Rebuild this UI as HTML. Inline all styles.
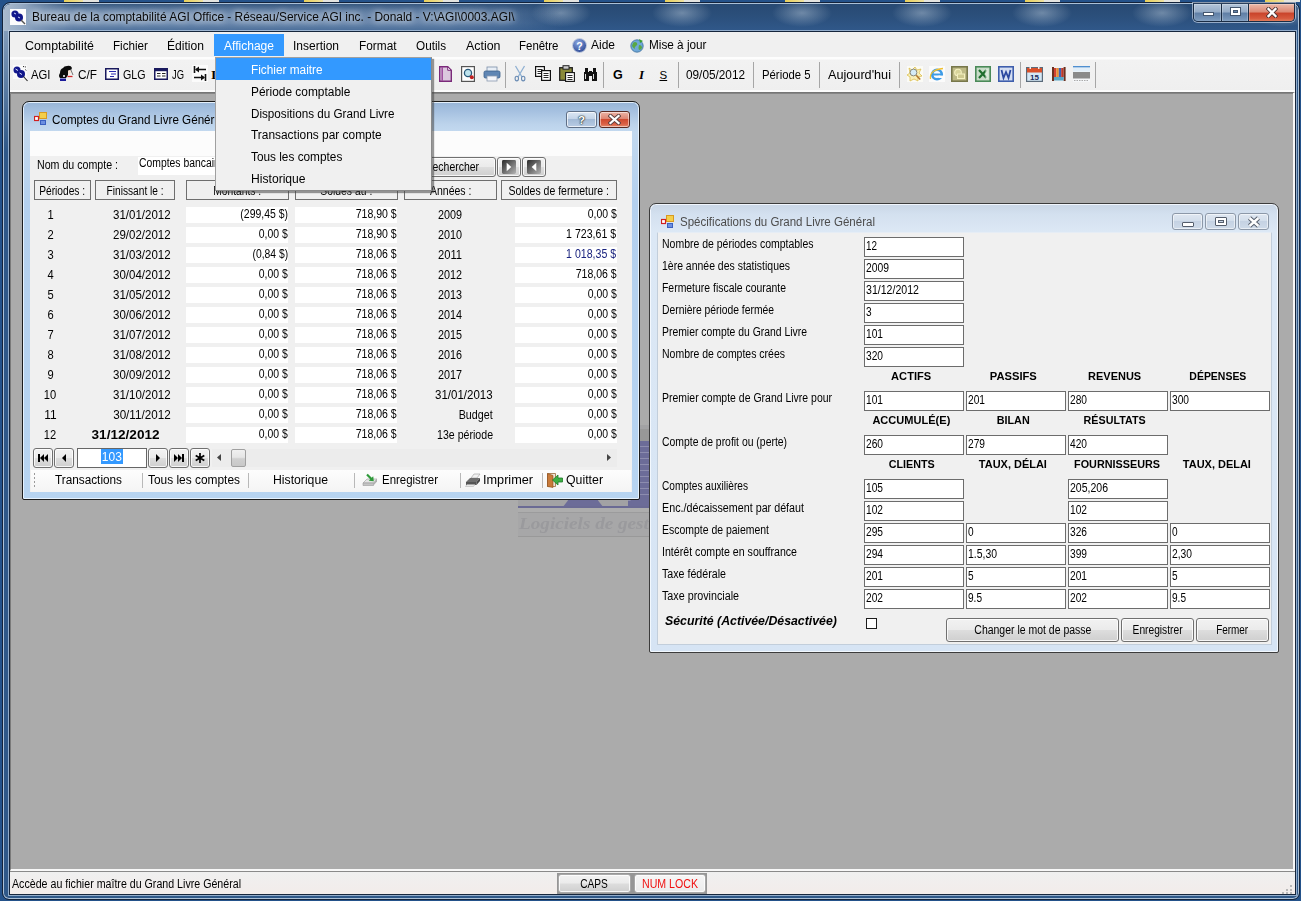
<!DOCTYPE html>
<html lang="fr"><head><meta charset="utf-8"><title>Bureau de la comptabilité AGI Office</title>
<style>
html,body{margin:0;padding:0;}
body{width:1301px;height:901px;overflow:hidden;position:relative;background:#24528a;font-family:"Liberation Sans",sans-serif;font-size:12.5px;color:#000;}
div,span,svg{position:absolute;box-sizing:border-box;}
.t{white-space:pre;}
.tb{background:#fff;border:1px solid #6c6c6c;}
.hd{background:#f0f0f0;border:1px solid #6e6e6e;}
.btn{border:1px solid #707070;border-radius:3px;background:linear-gradient(#f2f2f2 0%,#ebebeb 48%,#dddddd 52%,#cfcfcf 100%);box-shadow:inset 0 0 0 1px rgba(255,255,255,.8);}
.cell{background:#fff;}
.sep{width:1px;background:#a6a6a6;}

</style></head>
<body>
<div class="" style="left:64px;top:0px;width:19px;height:2px;background:linear-gradient(to right,#e9cf58,#efe2a0);"></div>
<div class="" style="left:83px;top:0px;width:16px;height:2px;background:#e4e4e0;"></div>
<div class="" style="left:184px;top:0px;width:19px;height:2px;background:linear-gradient(to right,#e9cf58,#efe2a0);"></div>
<div class="" style="left:203px;top:0px;width:16px;height:2px;background:#e4e4e0;"></div>
<div class="" style="left:304px;top:0px;width:19px;height:2px;background:linear-gradient(to right,#e9cf58,#efe2a0);"></div>
<div class="" style="left:323px;top:0px;width:16px;height:2px;background:#e4e4e0;"></div>
<div class="" style="left:424px;top:0px;width:19px;height:2px;background:linear-gradient(to right,#e9cf58,#efe2a0);"></div>
<div class="" style="left:443px;top:0px;width:16px;height:2px;background:#e4e4e0;"></div>
<div class="" style="left:544px;top:0px;width:19px;height:2px;background:linear-gradient(to right,#e9cf58,#efe2a0);"></div>
<div class="" style="left:563px;top:0px;width:16px;height:2px;background:#e4e4e0;"></div>
<div class="" style="left:665px;top:0px;width:19px;height:2px;background:linear-gradient(to right,#e9cf58,#efe2a0);"></div>
<div class="" style="left:684px;top:0px;width:16px;height:2px;background:#e4e4e0;"></div>
<div class="" style="left:785px;top:0px;width:19px;height:2px;background:linear-gradient(to right,#e9cf58,#efe2a0);"></div>
<div class="" style="left:804px;top:0px;width:16px;height:2px;background:#e4e4e0;"></div>
<div class="" style="left:905px;top:0px;width:19px;height:2px;background:linear-gradient(to right,#e9cf58,#efe2a0);"></div>
<div class="" style="left:924px;top:0px;width:16px;height:2px;background:#e4e4e0;"></div>
<div class="" style="left:1025px;top:0px;width:19px;height:2px;background:linear-gradient(to right,#e9cf58,#efe2a0);"></div>
<div class="" style="left:1044px;top:0px;width:16px;height:2px;background:#e4e4e0;"></div>
<div class="" style="left:1145px;top:0px;width:19px;height:2px;background:linear-gradient(to right,#e9cf58,#efe2a0);"></div>
<div class="" style="left:1164px;top:0px;width:16px;height:2px;background:#e4e4e0;"></div>
<div class="" style="left:1265px;top:0px;width:19px;height:2px;background:linear-gradient(to right,#e9cf58,#efe2a0);"></div>
<div class="" style="left:1284px;top:0px;width:16px;height:2px;background:#e4e4e0;"></div>
<div class="" style="left:2px;top:2px;width:1298px;height:898px;border-radius:8px 8px 7px 7px;background:#2f5888;border:1px solid #14233a;box-shadow:inset 0 0 0 1px rgba(215,228,242,.75);"></div>
<div class="" style="left:4px;top:4px;width:1294px;height:27px;border-radius:6px 6px 0 0;background:radial-gradient(ellipse 30px 14px at 557px 9px,rgba(205,218,230,.42),rgba(205,218,230,0) 100%),radial-gradient(ellipse 30px 14px at 678px 9px,rgba(205,218,230,.42),rgba(205,218,230,0) 100%),radial-gradient(ellipse 30px 14px at 798px 9px,rgba(205,218,230,.42),rgba(205,218,230,0) 100%),radial-gradient(ellipse 30px 14px at 918px 9px,rgba(205,218,230,.42),rgba(205,218,230,0) 100%),radial-gradient(ellipse 30px 14px at 1038px 9px,rgba(205,218,230,.42),rgba(205,218,230,0) 100%),radial-gradient(ellipse 30px 14px at 1158px 9px,rgba(205,218,230,.42),rgba(205,218,230,0) 100%),radial-gradient(ellipse 30px 14px at 1278px 9px,rgba(205,218,230,.42),rgba(205,218,230,0) 100%),linear-gradient(#284a73 0%,#2b4f7b 45%,#30588a 100%);"></div>
<div class="" style="left:4px;top:4px;width:620px;height:27px;border-radius:6px 0 0 0;background:linear-gradient(to right,rgba(176,192,210,.95) 0px,rgba(150,172,198,.85) 30px,rgba(132,158,190,.75) 120px,rgba(125,152,186,.7) 440px,rgba(110,140,178,.45) 505px,rgba(90,122,165,0) 560px);-webkit-mask-image:linear-gradient(to right,#000 0px,#000 20px,transparent 70px),linear-gradient(rgba(0,0,0,.25) 0px,rgba(0,0,0,.8) 6px,#000 10px,#000 19px,rgba(0,0,0,.45) 27px);mask-image:linear-gradient(to right,#000 0px,#000 20px,transparent 70px),linear-gradient(rgba(0,0,0,.25) 0px,rgba(0,0,0,.8) 6px,#000 10px,#000 19px,rgba(0,0,0,.45) 27px);"></div>
<div class="" style="left:4px;top:31px;width:5px;height:120px;background:linear-gradient(rgba(150,172,198,.8),rgba(46,85,133,0));"></div>
<div class="" style="left:8px;top:30px;width:1289px;height:866px;border:1px solid rgba(200,218,238,.65);"></div>
<div class="" style="left:9px;top:31px;width:1287px;height:864px;border:1px solid #16263c;background:#f0f0f0;"></div>
<svg style="left:10px;top:9px" width="17" height="17" viewBox="0 0 17 17"><rect width="16" height="16" fill="#fcfcfc"/><circle cx="5" cy="5" r="3.6" fill="#141a8c"/><circle cx="9" cy="8.5" r="4" fill="#10168a"/><path d="M11 11 L15 15" stroke="#555" stroke-width="1.4"/><path d="M4 4 l2 1 M8 8 l2 1" stroke="#cfd4ff" stroke-width="1"/></svg>
<span class="t" style="left:31.50px;top:9.00px;height:16px;line-height:16px;transform:scaleX(0.9540);transform-origin:0 50%;color:#0a0a0a;text-shadow:0 0 6px rgba(255,255,255,.9),0 0 10px rgba(255,255,255,.7);">Bureau de la comptabilité AGI Office - Réseau/Service AGI inc. - Donald - V:\AGI\0003.AGI\</span>
<div class="" style="left:1193px;top:3px;width:102px;height:19px;border:1px solid #1a2c44;border-top-color:#2a3f5c;border-radius:0 0 5px 5px;box-shadow:0 0 0 1px rgba(220,230,245,.6);overflow:hidden;"><div style="left:0;top:0;width:28px;height:18px;background:linear-gradient(#b4c5d9 0%,#93aac6 45%,#5f7ea5 50%,#7795b8 85%,#93afcd 100%);border-right:1px solid #1a2c44;box-shadow:inset 0 0 0 1px rgba(255,255,255,.25);"></div><div style="left:28px;top:0;width:27px;height:18px;background:linear-gradient(#b4c5d9 0%,#93aac6 45%,#5f7ea5 50%,#7795b8 85%,#93afcd 100%);border-right:1px solid #1a2c44;box-shadow:inset 0 0 0 1px rgba(255,255,255,.25);"></div><div style="left:55px;top:0;width:46px;height:18px;background:linear-gradient(#ebbaaa 0%,#dc8772 45%,#c9432a 50%,#d65a3e 80%,#e48a68 100%);box-shadow:inset 0 0 0 1px rgba(255,255,255,.25);"></div><div style="left:9px;top:8px;width:11px;height:4px;background:#fff;border:1px solid #44566e;"></div><div style="left:36px;top:3px;width:11px;height:9px;background:#fff;border:1px solid #44566e;"></div><div style="left:39px;top:6px;width:5px;height:3px;background:#6585ab;border:1px solid #44566e;"></div><svg style="left:72px;top:3px" width="12" height="11" viewBox="0 0 12 11"><path d="M2.500 2l7 7M9.500 2l-7 7" stroke="#4a3434" stroke-width="4" stroke-linecap="square"/><path d="M2.500 2l7 7M9.500 2l-7 7" stroke="#fff" stroke-width="2.300" stroke-linecap="square"/></svg></div>
<div class="" style="left:10px;top:32px;width:1285px;height:26px;background:#f0f0f0;"></div>
<div class="" style="left:214px;top:34px;width:70px;height:22px;background:#3399ff;"></div>
<span class="t" style="left:25.00px;top:37.80px;height:16px;line-height:16px;transform:scaleX(0.9930);transform-origin:0 50%;color:#000;">Comptabilité</span>
<span class="t" style="left:113.00px;top:37.80px;height:16px;line-height:16px;transform:scaleX(0.9329);transform-origin:0 50%;color:#000;">Fichier</span>
<span class="t" style="left:167.00px;top:37.80px;height:16px;line-height:16px;transform:scaleX(0.9677);transform-origin:0 50%;color:#000;">Édition</span>
<span class="t" style="left:224.00px;top:37.80px;height:16px;line-height:16px;transform:scaleX(0.9633);transform-origin:0 50%;color:#fff;">Affichage</span>
<span class="t" style="left:292.50px;top:37.80px;height:16px;line-height:16px;transform:scaleX(0.9596);transform-origin:0 50%;color:#000;">Insertion</span>
<span class="t" style="left:358.50px;top:37.80px;height:16px;line-height:16px;transform:scaleX(0.9475);transform-origin:0 50%;color:#000;">Format</span>
<span class="t" style="left:415.50px;top:37.80px;height:16px;line-height:16px;transform:scaleX(0.9389);transform-origin:0 50%;color:#000;">Outils</span>
<span class="t" style="left:465.50px;top:37.80px;height:16px;line-height:16px;transform:scaleX(0.9928);transform-origin:0 50%;color:#000;">Action</span>
<span class="t" style="left:519.00px;top:37.80px;height:16px;line-height:16px;transform:scaleX(0.9169);transform-origin:0 50%;color:#000;">Fenêtre</span>
<svg style="left:572px;top:38px" width="15" height="15" viewBox="0 0 15 15"><defs><radialGradient id="ag" cx=".4" cy=".3" r=".8"><stop offset="0" stop-color="#8aa6e0"/><stop offset="1" stop-color="#23408e"/></radialGradient></defs><circle cx="7.5" cy="7.5" r="7" fill="url(#ag)" stroke="#c8d0e0" stroke-width="1"/><text x="7.5" y="11.5" font-size="10.5" font-weight="bold" text-anchor="middle" fill="#fff" font-family="Liberation Sans, sans-serif">?</text></svg>
<span class="t" style="left:591.00px;top:37.20px;height:16px;line-height:16px;transform:scaleX(0.9588);transform-origin:0 50%;">Aide</span>
<svg style="left:630px;top:38px" width="15" height="15" viewBox="0 0 15 15"><circle cx="7" cy="8" r="6.2" fill="#6fa8d8" stroke="#3d6e9c" stroke-width=".8"/><path d="M3 5 q2 -2 4 0 q1 2 -1 3 q-2 1 -1 3 q-2 -1 -3 -3z M9 7 q3 0 3 3 q-1 2 -3 2 q-1 -2 0 -5z" fill="#5aa845"/><path d="M9 1 l4 2 -3 2z" fill="#3aa030"/></svg>
<span class="t" style="left:648.50px;top:37.20px;height:16px;line-height:16px;transform:scaleX(0.9407);transform-origin:0 50%;">Mise à jour</span>
<div class="" style="left:10px;top:57px;width:1285px;height:35px;background:linear-gradient(#fdfdfd 0px,#fdfdfd 2px,#f2f2f2 3px,#efefef 100%);border-bottom:1px solid #d6d6d6;"></div>
<div class="" style="left:10px;top:90px;width:1285px;height:2px;background:linear-gradient(#fbfbfb,#fdfdfd);"></div>
<svg style="left:12px;top:65px" width="17" height="17" viewBox="0 0 17 17"><rect x="1" y="0" width="14" height="14" fill="#fafafa"/><circle cx="5" cy="5" r="3.500" fill="#141a8c"/><circle cx="9" cy="9" r="4" fill="#10168a"/><path d="M11.500 11.500 L15.500 16" stroke="#222" stroke-width="1.100"/><path d="M11 1.500 l3 .5 M13.500 4.500 l1 1.500" stroke="#222" stroke-width="1" stroke-dasharray="1.200 1"/><path d="M3.500 4 l2.500 1.500 M7.500 8 l2.500 1.500" stroke="#dfe3ff" stroke-width="1"/></svg>
<span class="t" style="left:31.00px;top:67.00px;height:16px;line-height:16px;transform:scaleX(0.9057);transform-origin:0 50%;">AGI</span>
<svg style="left:58px;top:65px" width="17" height="17" viewBox="0 0 17 17"><path d="M5 3 q1 -2 4 -2 q4 -1 5 2 l-1 2 q-2 0 -3 2 l0 3 l-2 3 h-6 q-2 -2 0 -5 q0 -4 3 -5z" fill="#0c0c0c"/><path d="M10 5.500 l2.500 -.5 l.5 3 l-3 1z" fill="#f6e2d2"/><rect x="2" y="13.500" width="6" height="2.500" fill="#1a1a9a"/><path d="M9.500 11.500 h5" stroke="#d02828" stroke-width="1.300"/><path d="M12.500 4 l2.500 6" stroke="#555" stroke-width=".8"/><circle cx="6" cy="11" r="1" fill="#fff"/></svg>
<span class="t" style="left:77.50px;top:67.00px;height:16px;line-height:16px;transform:scaleX(0.9434);transform-origin:0 50%;">C/F</span>
<svg style="left:105px;top:68px" width="14" height="12" viewBox="0 0 14 12"><rect x=".75" y=".75" width="12.5" height="10.5" fill="#fff" stroke="#1a1a5e" stroke-width="1.5"/><path d="M4 3.5h7 M6 6h5 M5 8.5h4" stroke="#2a2ab0" stroke-width="1"/></svg>
<span class="t" style="left:122.50px;top:67.00px;height:16px;line-height:16px;transform:scaleX(0.8526);transform-origin:0 50%;">GLG</span>
<svg style="left:154px;top:68px" width="14" height="12" viewBox="0 0 14 12"><rect x=".75" y=".75" width="12.5" height="10.5" fill="#fff" stroke="#1a1a5e" stroke-width="1.5"/><rect x="1" y="1" width="12" height="2.2" fill="#1a1a5e"/><path d="M3 5.5h3.5 M8 5.5h3.5 M3 8h3.5 M8 8h3.5" stroke="#222" stroke-width="1.1"/></svg>
<span class="t" style="left:172.00px;top:67.00px;height:16px;line-height:16px;transform:scaleX(0.7515);transform-origin:0 50%;">JG</span>
<svg style="left:192px;top:65px" width="16" height="17" viewBox="0 0 16 17"><rect width="16" height="17" fill="#fbfbfb"/><path d="M2.500 1v7 M13.500 9v7" stroke="#111" stroke-width="1.600"/><path d="M4 4.500h10 M12 12.500h-10" stroke="#111" stroke-width="1.400"/><path d="M3 4.500l4-3v6z M13 12.500l-4-3v6z" fill="#111"/></svg>
<span class="t" style="left:211.00px;top:67.00px;height:16px;line-height:16px;font-size:13.5px;font-weight:bold;font-family:'Liberation Serif',serif;">I</span>
<svg style="left:439px;top:66px" width="13" height="16" viewBox="0 0 13 16"><path d="M.7 .7h8l3.6 3.6v11H.7z" fill="#dcc8de" stroke="#7a2a7a" stroke-width="1.4"/><path d="M3.2 1v14" stroke="#a050a0" stroke-width="1.6"/><path d="M8.7 .7v3.6h3.6z" fill="#f4eef4" stroke="#7a2a7a" stroke-width="1"/></svg>
<svg style="left:461px;top:66px" width="15" height="16" viewBox="0 0 15 16"><rect x=".6" y=".6" width="12.8" height="14.8" fill="#fff" stroke="#555" stroke-width="1.2"/><circle cx="7" cy="7" r="3.6" fill="#bfe4ee" stroke="#2a5a7a" stroke-width="1.3"/><circle cx="10.8" cy="11.2" r="2" fill="#c02020"/></svg>
<svg style="left:483px;top:66px" width="18" height="16" viewBox="0 0 18 16"><rect x="4" y="1" width="10" height="5" fill="#e8eef6" stroke="#7a8ea8" stroke-width=".8"/><rect x="1" y="5" width="16" height="7" rx="1.5" fill="#5f86b4" stroke="#3a5f8c" stroke-width=".8"/><rect x="4" y="10" width="10" height="5" fill="#f4f6fa" stroke="#8a9ab0" stroke-width=".8"/></svg>
<div class="sep" style="left:505px;top:62px;width:1px;height:26px;"></div>
<svg style="left:512px;top:65px" width="16" height="17" viewBox="0 0 16 17"><path d="M3.5 1 L10 12 M12.5 1 L6 12" stroke="#8fb0d2" stroke-width="1.3" fill="none"/><ellipse cx="4.8" cy="13.6" rx="1.7" ry="2.3" fill="none" stroke="#6a8cb4" stroke-width="1.1"/><ellipse cx="11.2" cy="13.6" rx="1.7" ry="2.3" fill="none" stroke="#6a8cb4" stroke-width="1.1"/></svg>
<svg style="left:535px;top:66px" width="16" height="15" viewBox="0 0 16 15"><rect x=".6" y=".6" width="8.8" height="9.8" fill="#fff" stroke="#111" stroke-width="1.2"/><path d="M2.5 3.5h5M2.5 5.5h5M2.5 7.5h5" stroke="#111" stroke-width=".9"/><rect x="6.6" y="4.6" width="8.8" height="9.8" fill="#fff" stroke="#111" stroke-width="1.2"/><path d="M8.5 7.5h5M8.5 9.5h5M8.5 11.5h5" stroke="#111" stroke-width=".9"/></svg>
<svg style="left:559px;top:65px" width="16" height="17" viewBox="0 0 16 17"><rect x=".7" y="2.7" width="12.6" height="12.6" fill="#8a8a3a" stroke="#222" stroke-width="1.3"/><rect x="4" y=".7" width="6" height="3.5" fill="#ccc" stroke="#222" stroke-width="1"/><rect x="6.6" y="7.6" width="8.8" height="8.8" fill="#fff" stroke="#111" stroke-width="1.1"/><path d="M8.5 10.5h5M8.5 12.5h5M8.5 14.5h5" stroke="#111" stroke-width=".9"/></svg>
<svg style="left:583px;top:66px" width="15" height="16" viewBox="0 0 15 16"><path d="M2 2h3v4h-3z M10 2h3v4h-3z" fill="#111"/><path d="M1 6h5v9h-5z M9 6h5v9h-5z" fill="#111"/><rect x="6" y="5" width="3" height="5" fill="#111"/><path d="M2.5 8v5 M10.5 8v5" stroke="#ddd" stroke-width="1"/></svg>
<div class="sep" style="left:603px;top:62px;width:1px;height:26px;"></div>
<span class="t" style="left:613.00px;top:67.00px;height:16px;line-height:16px;font-weight:bold;">G</span>
<span class="t" style="left:639.00px;top:67.00px;height:16px;line-height:16px;font-size:13px;font-weight:bold;font-style:italic;font-family:'Liberation Serif',serif;">I</span>
<span class="t" style="left:659.50px;top:67.00px;height:16px;line-height:16px;font-size:11.5px;text-decoration:underline;">S</span>
<div class="sep" style="left:678px;top:62px;width:1px;height:26px;"></div>
<span class="t" style="left:686.00px;top:67.00px;height:16px;line-height:16px;transform:scaleX(0.9431);transform-origin:0 50%;">09/05/2012</span>
<div class="sep" style="left:753px;top:62px;width:1px;height:26px;"></div>
<span class="t" style="left:762.00px;top:67.00px;height:16px;line-height:16px;transform:scaleX(0.9063);transform-origin:0 50%;">Période 5</span>
<div class="sep" style="left:819px;top:62px;width:1px;height:26px;"></div>
<span class="t" style="left:828.00px;top:67.00px;height:16px;line-height:16px;transform:scaleX(1.0133);transform-origin:0 50%;">Aujourd&#x27;hui</span>
<div class="sep" style="left:899px;top:62px;width:1px;height:26px;"></div>
<svg style="left:907px;top:66px" width="16" height="16" viewBox="0 0 16 16"><rect width="16" height="16" fill="#fbfbf6"/><path d="M2 2l3 2 3-3 2 3 4-1-2 4 3 3-4 1 0 4-4-2-4 2 0-4-3-2 3-2z" fill="#f8efb8" stroke="#d8b840" stroke-width=".7"/><circle cx="6.5" cy="6.5" r="3.4" fill="#d4ecf8" stroke="#8a8a7a" stroke-width="1"/><path d="M9.2 9.2l4 4.3" stroke="#b07830" stroke-width="1.6"/></svg>
<svg style="left:929px;top:66px" width="16" height="16" viewBox="0 0 16 16"><rect width="16" height="16" fill="#fbfbfb"/><circle cx="8" cy="8.5" r="4.8" fill="none" stroke="#3d9be6" stroke-width="2.6"/><path d="M4 8.5h9" stroke="#3d9be6" stroke-width="2"/><rect x="9.5" y="9.6" width="6" height="2.4" fill="#fbfbfb"/><path d="M1.5 13 q-1.5 -9 12.5 -10.5" fill="none" stroke="#f0c030" stroke-width="1.3"/></svg>
<svg style="left:951px;top:66px" width="17" height="16" viewBox="0 0 17 16"><rect x=".8" y=".8" width="15.4" height="14.4" fill="#bdb985" stroke="#77774a" stroke-width="1.6"/><circle cx="7" cy="6.5" r="3.3" fill="#d8d49a" stroke="#f4f0c0" stroke-width="1.1"/><rect x="6.5" y="8" width="7" height="4.5" fill="#cfca90" stroke="#f4f0c0" stroke-width="1"/></svg>
<svg style="left:975px;top:66px" width="16" height="16" viewBox="0 0 16 16"><rect x=".8" y=".8" width="14.4" height="14.4" fill="#c8dcc8" stroke="#4a8a58" stroke-width="1.6"/><path d="M4 4l7.5 8M11.5 4l-7.5 8" stroke="#1f6e2e" stroke-width="2.2"/><rect x="10.5" y="3" width="3" height="10" fill="#e4efe4" opacity=".7"/></svg>
<svg style="left:998px;top:66px" width="16" height="16" viewBox="0 0 16 16"><rect x=".8" y=".8" width="14.4" height="14.4" fill="#d4def2" stroke="#3e5eac" stroke-width="1.6"/><path d="M3.5 4l2 8 2.5-6 2.5 6 2-8" stroke="#2a48a0" stroke-width="1.8" fill="none"/></svg>
<div class="sep" style="left:1020px;top:62px;width:1px;height:26px;"></div>
<svg style="left:1026px;top:66px" width="17" height="16" viewBox="0 0 17 16"><rect x=".6" y="1.6" width="15.8" height="13.8" fill="#d4e8f6" stroke="#5a6a7a" stroke-width="1.2"/><rect x="1" y="2" width="15" height="4.5" fill="#d8502a"/><rect x="3.5" y="0" width="1.5" height="3" fill="#eee"/><rect x="12" y="0" width="1.5" height="3" fill="#eee"/><text x="8.5" y="14" font-size="8" font-weight="bold" text-anchor="middle" fill="#1a2a5e" font-family="Liberation Sans, sans-serif">15</text></svg>
<svg style="left:1051px;top:66px" width="16" height="16" viewBox="0 0 16 16"><rect x="1" y="1" width="2" height="14" fill="#6a3020"/><rect x="3" y="2" width="2.4" height="9" fill="#d04030"/><rect x="5.4" y="2" width="2.4" height="9" fill="#e89030"/><rect x="7.8" y="2" width="2.4" height="9" fill="#4060b0"/><rect x="10.2" y="2" width="2.4" height="9" fill="#c03828"/><rect x="12.6" y="1" width="2" height="14" fill="#6a3020"/><rect x="3" y="11" width="9.6" height="3.5" fill="#58a8c8"/></svg>
<svg style="left:1073px;top:66px" width="17" height="16" viewBox="0 0 17 16"><rect x="0" y="0" width="17" height="16" fill="#f4f6f8"/><rect x="0" y="0" width="17" height="1.6" fill="#4f8fd0"/><rect x="0" y="1.6" width="17" height="4" fill="#e2eef8"/><rect x="0" y="6" width="17" height="6.5" fill="#8a8a8a"/><path d="M1 14.5h15" stroke="#aaa" stroke-width="1" stroke-dasharray="1.5 1"/></svg>
<div class="sep" style="left:1095px;top:62px;width:1px;height:26px;"></div>
<div class="" style="left:10px;top:92px;width:1285px;height:779px;background:#ababab;border:1px solid #6a6a6a;border-right:2px solid #f8f8f8;border-bottom:2px solid #f8f8f8;border-left:1px solid #7a7a7a;"></div>
<div class="" style="left:10px;top:92px;width:1283px;height:2px;background:linear-gradient(#6e6e6e,#8e8e8e);"></div>
<div class="" style="left:10px;top:871px;width:1285px;height:23px;background:linear-gradient(#f0f0f0,#f2ecea);border-top:1px solid #8a8a8a;"></div>
<span class="t" style="left:11.80px;top:875.70px;height:16px;line-height:16px;transform:scaleX(0.8518);transform-origin:0 50%;">Accède au fichier maître du Grand Livre Général</span>
<div class="" style="left:557px;top:873px;width:150px;height:21px;background:#969696;"></div>
<div class="btn" style="left:558px;top:874px;width:73px;height:19px;border-radius:3px;border-color:#a8a8a8;"></div>
<span class="t" style="left:577.47px;top:875.70px;height:16px;line-height:16px;transform:scaleX(0.8132);transform-origin:50% 50%;">CAPS</span>
<div class="btn" style="left:634px;top:874px;width:72px;height:19px;border-radius:3px;border-color:#a8a8a8;background:linear-gradient(#f6f6f6,#ececec);"></div>
<span class="t" style="left:636.51px;top:875.70px;height:16px;line-height:16px;transform:scaleX(0.8487);transform-origin:50% 50%;color:#f01010;">NUM LOCK</span>
<div class="" style="left:1290px;top:885px;width:2px;height:2px;background:#b8b8b8;"></div>
<div class="" style="left:1286px;top:889px;width:2px;height:2px;background:#b8b8b8;"></div>
<div class="" style="left:1290px;top:889px;width:2px;height:2px;background:#b8b8b8;"></div>
<div class="" style="left:1282px;top:892px;width:2px;height:2px;background:#b8b8b8;"></div>
<div class="" style="left:1286px;top:892px;width:2px;height:2px;background:#b8b8b8;"></div>
<div class="" style="left:1290px;top:892px;width:2px;height:2px;background:#b8b8b8;"></div>
<div class="" style="left:518px;top:425px;width:140px;height:112px;overflow:hidden;"><div style="left:0;top:0;width:140px;height:87px;background:#a2a2a4;"></div><div style="left:110px;top:4px;width:30px;height:12px;background:#989898;"></div><div style="left:110px;top:16px;width:30px;height:66px;background:repeating-linear-gradient(#6c6c98 0px,#6c6c98 5px,#8c8cae 5px,#8c8cae 6px);"></div><div style="left:48px;top:74px;width:30px;height:8px;background:#6c6c98;transform:skewX(-38deg);"></div><div style="left:52px;top:74px;width:30px;height:8px;background:#6c6c98;transform:skewX(38deg);"></div><div style="left:114px;top:74px;width:30px;height:8px;background:#6c6c98;transform:skewX(30deg);"></div><div style="left:0;top:81px;width:140px;height:2px;background:#6a6a94;"></div><div style="left:0;top:83px;width:140px;height:4px;background:#adadad;"></div><div style="left:0;top:87px;width:140px;height:25px;background:#a7a7a8;border-top:1px solid #9b9b9c;border-bottom:1px solid #999;"></div></div>
<span class="t" style="left:518.60px;top:511.50px;height:24px;line-height:24px;font-size:16px;transform:scaleX(1.1982);transform-origin:0 50%;font-weight:bold;font-style:italic;color:#9a9a9d;font-family:'Liberation Serif',serif;">Logiciels de gestion</span>
<div class="" style="left:22px;top:101px;width:618px;height:399px;border-radius:7px 7px 2px 2px;border:1px solid #1c1c1c;background:linear-gradient(#97b4d6 0px,#a7c2e1 10px,#bcd3eb 22px,#c3d9ef 30px,#b4d0ee 100px,#b7d4f1 100%);box-shadow:inset 0 0 0 1px rgba(235,245,255,.9);"></div>
<div class="" style="left:30px;top:131px;width:602px;height:361px;background:#f0f0f0;"></div>
<div class="" style="left:30px;top:131px;width:602px;height:25px;background:#fcfcfc;"></div>
<svg style="left:34px;top:112px" width="13" height="13" viewBox="0 0 13 13"><rect x="5.5" y=".5" width="7" height="6" fill="#f4cf4a" stroke="#d89a20"/><rect x=".5" y="4.5" width="4" height="4" fill="#fff" stroke="#d02020" stroke-width="1.2"/><rect x="6.5" y="8.5" width="5" height="4" fill="#6c8fe0" stroke="#3a60c0"/></svg>
<span class="t" style="left:52.30px;top:111.50px;height:16px;line-height:16px;transform:scaleX(0.9316);transform-origin:0 50%;">Comptes du Grand Livre Général</span>
<div class="" style="left:566px;top:111px;width:31px;height:17px;border:1px solid #5f6f86;border-radius:3px;background:linear-gradient(#dbe6f3 0%,#c4d4e8 45%,#a3bad6 50%,#b9cce4 100%);box-shadow:inset 0 0 0 1px rgba(255,255,255,.7);"></div>
<span class="t" style="left:577.98px;top:112.00px;height:16px;line-height:16px;font-size:11.5px;font-weight:bold;color:#fff;text-shadow:0 0 1px #233,0 0 1px #233,0 0 2px #233;">?</span>
<div class="" style="left:599px;top:111px;width:31px;height:17px;border:1px solid #5a2a22;border-radius:3px;background:linear-gradient(#ecb4a6 0%,#de8674 45%,#cf4a30 50%,#da6045 80%,#e68a6c 100%);box-shadow:inset 0 0 0 1px rgba(255,255,255,.5);"></div>
<svg style="left:608px;top:114px" width="13" height="11" viewBox="0 0 13 11"><path d="M2.5 2l8 7M10.5 2l-8 7" stroke="#5a4040" stroke-width="4" stroke-linecap="square"/><path d="M2.5 2l8 7M10.5 2l-8 7" stroke="#fff" stroke-width="2.3" stroke-linecap="square"/></svg>
<span class="t" style="left:37.00px;top:156.50px;height:16px;line-height:16px;transform:scaleX(0.8512);transform-origin:0 50%;">Nom du compte :</span>
<div class="" style="left:138px;top:157px;width:310px;height:18px;background:#fff;"></div>
<span class="t" style="left:138.80px;top:155.00px;height:16px;line-height:16px;transform:scaleX(0.8302);transform-origin:0 50%;">Comptes bancaires</span>
<div class="btn" style="left:420px;top:157px;width:76px;height:20px;"></div>
<span class="t" style="left:425.00px;top:158.50px;height:16px;line-height:16px;transform:scaleX(0.8358);transform-origin:0 50%;">Rechercher</span>
<div class="btn" style="left:497px;top:157px;width:24px;height:20px;"></div>
<svg style="left:502px;top:160px" width="14" height="14" viewBox="0 0 15 15"><defs><linearGradient id="dkr" x1="0" y1="0" x2="1" y2="1"><stop offset="0" stop-color="#2a2a2a"/><stop offset="1" stop-color="#b4b4b4"/></linearGradient></defs><rect width="15" height="15" rx="1.5" fill="url(#dkr)"/><polygon points="5,3 10,7.5 5,12" fill="#fff"/></svg>
<div class="btn" style="left:522px;top:157px;width:24px;height:20px;"></div>
<svg style="left:527px;top:160px" width="14" height="14" viewBox="0 0 15 15"><defs><linearGradient id="dkl" x1="0" y1="0" x2="1" y2="1"><stop offset="0" stop-color="#2a2a2a"/><stop offset="1" stop-color="#b4b4b4"/></linearGradient></defs><rect width="15" height="15" rx="1.5" fill="url(#dkl)"/><polygon points="10,3 5,7.5 10,12" fill="#fff"/></svg>
<div class="hd" style="left:34px;top:180px;width:57px;height:20px;"></div>
<span class="t" style="left:34.36px;top:183.00px;height:16px;line-height:16px;transform:scaleX(0.8173);transform-origin:50% 50%;">Périodes :</span>
<div class="hd" style="left:95px;top:180px;width:80px;height:20px;"></div>
<span class="t" style="left:99.91px;top:183.00px;height:16px;line-height:16px;transform:scaleX(0.8123);transform-origin:50% 50%;">Finissant le :</span>
<div class="hd" style="left:186px;top:180px;width:103px;height:20px;"></div>
<span class="t" style="left:208.33px;top:183.00px;height:16px;line-height:16px;transform:scaleX(0.8227);transform-origin:50% 50%;">Montants :</span>
<div class="hd" style="left:295px;top:180px;width:103px;height:20px;"></div>
<span class="t" style="left:315.23px;top:183.00px;height:16px;line-height:16px;transform:scaleX(0.8314);transform-origin:50% 50%;">Soldes au :</span>
<div class="hd" style="left:404px;top:180px;width:93px;height:20px;"></div>
<span class="t" style="left:425.83px;top:183.00px;height:16px;line-height:16px;transform:scaleX(0.8410);transform-origin:50% 50%;">Années :</span>
<div class="hd" style="left:501px;top:180px;width:116px;height:20px;"></div>
<span class="t" style="left:499.26px;top:183.00px;height:16px;line-height:16px;transform:scaleX(0.8411);transform-origin:50% 50%;">Soldes de fermeture :</span>
<div class="cell" style="left:186px;top:207px;width:102px;height:16px;"></div>
<div class="cell" style="left:295px;top:207px;width:102px;height:16px;"></div>
<div class="cell" style="left:515px;top:207px;width:102px;height:16px;"></div>
<span class="t" style="left:46.52px;top:206.80px;height:16px;line-height:16px;transform:scaleX(0.8917);transform-origin:50% 50%;">1</span>
<span class="t" style="left:108.44px;top:206.80px;height:16px;line-height:16px;transform:scaleX(0.9191);transform-origin:100% 50%;">31/01/2012</span>
<span class="t" style="left:230.83px;top:206.00px;height:16px;line-height:16px;transform:scaleX(0.8355);transform-origin:100% 50%;">(299,45 $)</span>
<span class="t" style="left:347.84px;top:206.00px;height:16px;line-height:16px;transform:scaleX(0.8426);transform-origin:100% 50%;">718,90 $</span>
<span class="t" style="left:437.50px;top:206.80px;height:16px;line-height:16px;transform:scaleX(0.8629);transform-origin:0 50%;">2009</span>
<span class="t" style="left:581.75px;top:206.00px;height:16px;line-height:16px;transform:scaleX(0.8345);transform-origin:100% 50%;">0,00 $</span>
<div class="cell" style="left:186px;top:227px;width:102px;height:16px;"></div>
<div class="cell" style="left:295px;top:227px;width:102px;height:16px;"></div>
<div class="cell" style="left:515px;top:227px;width:102px;height:16px;"></div>
<span class="t" style="left:46.52px;top:226.80px;height:16px;line-height:16px;transform:scaleX(0.8917);transform-origin:50% 50%;">2</span>
<span class="t" style="left:108.44px;top:226.80px;height:16px;line-height:16px;transform:scaleX(0.9191);transform-origin:100% 50%;">29/02/2012</span>
<span class="t" style="left:253.05px;top:226.00px;height:16px;line-height:16px;transform:scaleX(0.8345);transform-origin:100% 50%;">0,00 $</span>
<span class="t" style="left:347.84px;top:226.00px;height:16px;line-height:16px;transform:scaleX(0.8426);transform-origin:100% 50%;">718,90 $</span>
<span class="t" style="left:437.50px;top:226.80px;height:16px;line-height:16px;transform:scaleX(0.8629);transform-origin:0 50%;">2010</span>
<span class="t" style="left:557.42px;top:226.00px;height:16px;line-height:16px;transform:scaleX(0.8463);transform-origin:100% 50%;">1 723,61 $</span>
<div class="cell" style="left:186px;top:247px;width:102px;height:16px;"></div>
<div class="cell" style="left:295px;top:247px;width:102px;height:16px;"></div>
<div class="cell" style="left:515px;top:247px;width:102px;height:16px;"></div>
<span class="t" style="left:46.52px;top:246.80px;height:16px;line-height:16px;transform:scaleX(0.8917);transform-origin:50% 50%;">3</span>
<span class="t" style="left:108.44px;top:246.80px;height:16px;line-height:16px;transform:scaleX(0.9191);transform-origin:100% 50%;">31/03/2012</span>
<span class="t" style="left:244.74px;top:246.00px;height:16px;line-height:16px;transform:scaleX(0.8267);transform-origin:100% 50%;">(0,84 $)</span>
<span class="t" style="left:347.84px;top:246.00px;height:16px;line-height:16px;transform:scaleX(0.8426);transform-origin:100% 50%;">718,06 $</span>
<span class="t" style="left:437.50px;top:246.80px;height:16px;line-height:16px;transform:scaleX(0.8925);transform-origin:0 50%;">2011</span>
<span class="t" style="left:557.42px;top:246.00px;height:16px;line-height:16px;transform:scaleX(0.8463);transform-origin:100% 50%;color:#1a237e;">1 018,35 $</span>
<div class="cell" style="left:186px;top:267px;width:102px;height:16px;"></div>
<div class="cell" style="left:295px;top:267px;width:102px;height:16px;"></div>
<div class="cell" style="left:515px;top:267px;width:102px;height:16px;"></div>
<span class="t" style="left:46.52px;top:266.80px;height:16px;line-height:16px;transform:scaleX(0.8917);transform-origin:50% 50%;">4</span>
<span class="t" style="left:108.44px;top:266.80px;height:16px;line-height:16px;transform:scaleX(0.9191);transform-origin:100% 50%;">30/04/2012</span>
<span class="t" style="left:253.05px;top:266.00px;height:16px;line-height:16px;transform:scaleX(0.8345);transform-origin:100% 50%;">0,00 $</span>
<span class="t" style="left:347.84px;top:266.00px;height:16px;line-height:16px;transform:scaleX(0.8426);transform-origin:100% 50%;">718,06 $</span>
<span class="t" style="left:437.50px;top:266.80px;height:16px;line-height:16px;transform:scaleX(0.8629);transform-origin:0 50%;">2012</span>
<span class="t" style="left:567.84px;top:266.00px;height:16px;line-height:16px;transform:scaleX(0.8426);transform-origin:100% 50%;">718,06 $</span>
<div class="cell" style="left:186px;top:287px;width:102px;height:16px;"></div>
<div class="cell" style="left:295px;top:287px;width:102px;height:16px;"></div>
<div class="cell" style="left:515px;top:287px;width:102px;height:16px;"></div>
<span class="t" style="left:46.52px;top:286.80px;height:16px;line-height:16px;transform:scaleX(0.8917);transform-origin:50% 50%;">5</span>
<span class="t" style="left:108.44px;top:286.80px;height:16px;line-height:16px;transform:scaleX(0.9191);transform-origin:100% 50%;">31/05/2012</span>
<span class="t" style="left:253.05px;top:286.00px;height:16px;line-height:16px;transform:scaleX(0.8345);transform-origin:100% 50%;">0,00 $</span>
<span class="t" style="left:347.84px;top:286.00px;height:16px;line-height:16px;transform:scaleX(0.8426);transform-origin:100% 50%;">718,06 $</span>
<span class="t" style="left:437.50px;top:286.80px;height:16px;line-height:16px;transform:scaleX(0.8629);transform-origin:0 50%;">2013</span>
<span class="t" style="left:581.75px;top:286.00px;height:16px;line-height:16px;transform:scaleX(0.8345);transform-origin:100% 50%;">0,00 $</span>
<div class="cell" style="left:186px;top:307px;width:102px;height:16px;"></div>
<div class="cell" style="left:295px;top:307px;width:102px;height:16px;"></div>
<div class="cell" style="left:515px;top:307px;width:102px;height:16px;"></div>
<span class="t" style="left:46.52px;top:306.80px;height:16px;line-height:16px;transform:scaleX(0.8917);transform-origin:50% 50%;">6</span>
<span class="t" style="left:108.44px;top:306.80px;height:16px;line-height:16px;transform:scaleX(0.9191);transform-origin:100% 50%;">30/06/2012</span>
<span class="t" style="left:253.05px;top:306.00px;height:16px;line-height:16px;transform:scaleX(0.8345);transform-origin:100% 50%;">0,00 $</span>
<span class="t" style="left:347.84px;top:306.00px;height:16px;line-height:16px;transform:scaleX(0.8426);transform-origin:100% 50%;">718,06 $</span>
<span class="t" style="left:437.50px;top:306.80px;height:16px;line-height:16px;transform:scaleX(0.8629);transform-origin:0 50%;">2014</span>
<span class="t" style="left:581.75px;top:306.00px;height:16px;line-height:16px;transform:scaleX(0.8345);transform-origin:100% 50%;">0,00 $</span>
<div class="cell" style="left:186px;top:327px;width:102px;height:16px;"></div>
<div class="cell" style="left:295px;top:327px;width:102px;height:16px;"></div>
<div class="cell" style="left:515px;top:327px;width:102px;height:16px;"></div>
<span class="t" style="left:46.52px;top:326.80px;height:16px;line-height:16px;transform:scaleX(0.8917);transform-origin:50% 50%;">7</span>
<span class="t" style="left:108.44px;top:326.80px;height:16px;line-height:16px;transform:scaleX(0.9191);transform-origin:100% 50%;">31/07/2012</span>
<span class="t" style="left:253.05px;top:326.00px;height:16px;line-height:16px;transform:scaleX(0.8345);transform-origin:100% 50%;">0,00 $</span>
<span class="t" style="left:347.84px;top:326.00px;height:16px;line-height:16px;transform:scaleX(0.8426);transform-origin:100% 50%;">718,06 $</span>
<span class="t" style="left:437.50px;top:326.80px;height:16px;line-height:16px;transform:scaleX(0.8629);transform-origin:0 50%;">2015</span>
<span class="t" style="left:581.75px;top:326.00px;height:16px;line-height:16px;transform:scaleX(0.8345);transform-origin:100% 50%;">0,00 $</span>
<div class="cell" style="left:186px;top:347px;width:102px;height:16px;"></div>
<div class="cell" style="left:295px;top:347px;width:102px;height:16px;"></div>
<div class="cell" style="left:515px;top:347px;width:102px;height:16px;"></div>
<span class="t" style="left:46.52px;top:346.80px;height:16px;line-height:16px;transform:scaleX(0.8917);transform-origin:50% 50%;">8</span>
<span class="t" style="left:108.44px;top:346.80px;height:16px;line-height:16px;transform:scaleX(0.9191);transform-origin:100% 50%;">31/08/2012</span>
<span class="t" style="left:253.05px;top:346.00px;height:16px;line-height:16px;transform:scaleX(0.8345);transform-origin:100% 50%;">0,00 $</span>
<span class="t" style="left:347.84px;top:346.00px;height:16px;line-height:16px;transform:scaleX(0.8426);transform-origin:100% 50%;">718,06 $</span>
<span class="t" style="left:437.50px;top:346.80px;height:16px;line-height:16px;transform:scaleX(0.8629);transform-origin:0 50%;">2016</span>
<span class="t" style="left:581.75px;top:346.00px;height:16px;line-height:16px;transform:scaleX(0.8345);transform-origin:100% 50%;">0,00 $</span>
<div class="cell" style="left:186px;top:367px;width:102px;height:16px;"></div>
<div class="cell" style="left:295px;top:367px;width:102px;height:16px;"></div>
<div class="cell" style="left:515px;top:367px;width:102px;height:16px;"></div>
<span class="t" style="left:46.52px;top:366.80px;height:16px;line-height:16px;transform:scaleX(0.8917);transform-origin:50% 50%;">9</span>
<span class="t" style="left:108.44px;top:366.80px;height:16px;line-height:16px;transform:scaleX(0.9191);transform-origin:100% 50%;">30/09/2012</span>
<span class="t" style="left:253.05px;top:366.00px;height:16px;line-height:16px;transform:scaleX(0.8345);transform-origin:100% 50%;">0,00 $</span>
<span class="t" style="left:347.84px;top:366.00px;height:16px;line-height:16px;transform:scaleX(0.8426);transform-origin:100% 50%;">718,06 $</span>
<span class="t" style="left:437.50px;top:366.80px;height:16px;line-height:16px;transform:scaleX(0.8629);transform-origin:0 50%;">2017</span>
<span class="t" style="left:581.75px;top:366.00px;height:16px;line-height:16px;transform:scaleX(0.8345);transform-origin:100% 50%;">0,00 $</span>
<div class="cell" style="left:186px;top:387px;width:102px;height:16px;"></div>
<div class="cell" style="left:295px;top:387px;width:102px;height:16px;"></div>
<div class="cell" style="left:515px;top:387px;width:102px;height:16px;"></div>
<span class="t" style="left:43.05px;top:386.80px;height:16px;line-height:16px;transform:scaleX(0.8917);transform-origin:50% 50%;">10</span>
<span class="t" style="left:108.44px;top:386.80px;height:16px;line-height:16px;transform:scaleX(0.9191);transform-origin:100% 50%;">31/10/2012</span>
<span class="t" style="left:253.05px;top:386.00px;height:16px;line-height:16px;transform:scaleX(0.8345);transform-origin:100% 50%;">0,00 $</span>
<span class="t" style="left:347.84px;top:386.00px;height:16px;line-height:16px;transform:scaleX(0.8426);transform-origin:100% 50%;">718,06 $</span>
<span class="t" style="left:430.44px;top:386.80px;height:16px;line-height:16px;transform:scaleX(0.9191);transform-origin:100% 50%;">31/01/2013</span>
<span class="t" style="left:581.75px;top:386.00px;height:16px;line-height:16px;transform:scaleX(0.8345);transform-origin:100% 50%;">0,00 $</span>
<div class="cell" style="left:186px;top:407px;width:102px;height:16px;"></div>
<div class="cell" style="left:295px;top:407px;width:102px;height:16px;"></div>
<div class="cell" style="left:515px;top:407px;width:102px;height:16px;"></div>
<span class="t" style="left:43.51px;top:406.80px;height:16px;line-height:16px;transform:scaleX(0.9550);transform-origin:50% 50%;">11</span>
<span class="t" style="left:109.36px;top:406.80px;height:16px;line-height:16px;transform:scaleX(0.9328);transform-origin:100% 50%;">30/11/2012</span>
<span class="t" style="left:253.05px;top:406.00px;height:16px;line-height:16px;transform:scaleX(0.8345);transform-origin:100% 50%;">0,00 $</span>
<span class="t" style="left:347.84px;top:406.00px;height:16px;line-height:16px;transform:scaleX(0.8426);transform-origin:100% 50%;">718,06 $</span>
<span class="t" style="left:453.38px;top:406.80px;height:16px;line-height:16px;transform:scaleX(0.8580);transform-origin:100% 50%;">Budget</span>
<span class="t" style="left:581.75px;top:406.00px;height:16px;line-height:16px;transform:scaleX(0.8345);transform-origin:100% 50%;">0,00 $</span>
<div class="cell" style="left:186px;top:427px;width:102px;height:16px;"></div>
<div class="cell" style="left:295px;top:427px;width:102px;height:16px;"></div>
<div class="cell" style="left:515px;top:427px;width:102px;height:16px;"></div>
<span class="t" style="left:43.05px;top:426.80px;height:16px;line-height:16px;transform:scaleX(0.8917);transform-origin:50% 50%;">12</span>
<span class="t" style="left:97.44px;top:426.80px;height:16px;line-height:16px;transform:scaleX(1.0869);transform-origin:100% 50%;font-weight:bold;">31/12/2012</span>
<span class="t" style="left:253.05px;top:426.00px;height:16px;line-height:16px;transform:scaleX(0.8345);transform-origin:100% 50%;">0,00 $</span>
<span class="t" style="left:347.84px;top:426.00px;height:16px;line-height:16px;transform:scaleX(0.8426);transform-origin:100% 50%;">718,06 $</span>
<span class="t" style="left:426.97px;top:426.80px;height:16px;line-height:16px;transform:scaleX(0.8481);transform-origin:100% 50%;">13e période</span>
<span class="t" style="left:581.75px;top:426.00px;height:16px;line-height:16px;transform:scaleX(0.8345);transform-origin:100% 50%;">0,00 $</span>
<div class="btn" style="left:33px;top:448px;width:20px;height:20px;"></div>
<svg style="left:33px;top:448px" width="20" height="20" viewBox="0 0 20 20"><rect x="5" y="6" width="2" height="8" fill="#000"/><polygon points="11,6 7,10 11,14" fill="#000"/><polygon points="15,6 11,10 15,14" fill="#000"/></svg>
<div class="btn" style="left:54px;top:448px;width:20px;height:20px;"></div>
<svg style="left:54px;top:448px" width="20" height="20" viewBox="0 0 20 20"><polygon points="12,6 8,10 12,14" fill="#000"/></svg>
<div class="" style="left:77px;top:448px;width:70px;height:20px;background:#fff;border:1px solid #666;"></div>
<div class="" style="left:101px;top:449px;width:22px;height:15px;background:#3399ff;"></div>
<span class="t" style="left:101.15px;top:448.50px;height:16px;line-height:16px;font-size:13px;transform:scaleX(0.9215);transform-origin:50% 50%;color:#fff;">103</span>
<div class="btn" style="left:148px;top:448px;width:20px;height:20px;"></div>
<svg style="left:148px;top:448px" width="20" height="20" viewBox="0 0 20 20"><polygon points="8,6 12,10 8,14" fill="#000"/></svg>
<div class="btn" style="left:169px;top:448px;width:20px;height:20px;"></div>
<svg style="left:169px;top:448px" width="20" height="20" viewBox="0 0 20 20"><polygon points="5,6 9,10 5,14" fill="#000"/><polygon points="9,6 13,10 9,14" fill="#000"/><rect x="13" y="6" width="2" height="8" fill="#000"/></svg>
<div class="btn" style="left:190px;top:448px;width:20px;height:20px;"></div>
<svg style="left:190px;top:448px" width="20" height="20" viewBox="0 0 20 20"><path d="M10 5v10 M5.7 7.5l8.6 5 M14.3 7.5l-8.6 5" stroke="#000" stroke-width="1.7"/></svg>
<div class="" style="left:212px;top:449px;width:405px;height:18px;background:#ececec;"></div>
<svg style="left:216px;top:453px" width="6" height="9" viewBox="0 0 6 9"><polygon points="5,1 1,4.5 5,8" fill="#444"/></svg>
<svg style="left:606px;top:453px" width="6" height="9" viewBox="0 0 6 9"><polygon points="1,1 5,4.5 1,8" fill="#444"/></svg>
<div class="" style="left:231px;top:449px;width:15px;height:18px;border:1px solid #a0a0a0;border-radius:2px;background:linear-gradient(#f0f0f0 0%,#e6e6e6 45%,#cfcfcf 55%,#c8c8c8 100%);"></div>
<div class="" style="left:31px;top:470px;width:600px;height:22px;background:linear-gradient(#fdfdfd,#f4f4f4);"></div>
<div class="" style="left:34px;top:473px;width:1px;height:2px;background:#9a9a9a;"></div>
<div class="" style="left:34px;top:477px;width:1px;height:2px;background:#9a9a9a;"></div>
<div class="" style="left:34px;top:481px;width:1px;height:2px;background:#9a9a9a;"></div>
<div class="" style="left:34px;top:485px;width:1px;height:2px;background:#9a9a9a;"></div>
<span class="t" style="left:55.00px;top:472.00px;height:16px;line-height:16px;transform:scaleX(0.9424);transform-origin:0 50%;">Transactions</span>
<div class="sep" style="left:142px;top:473px;width:1px;height:15px;background:#b8b8b8;"></div>
<span class="t" style="left:148.00px;top:472.00px;height:16px;line-height:16px;transform:scaleX(0.9528);transform-origin:0 50%;">Tous les comptes</span>
<div class="sep" style="left:248px;top:473px;width:1px;height:15px;background:#b8b8b8;"></div>
<span class="t" style="left:273.00px;top:472.00px;height:16px;line-height:16px;transform:scaleX(0.9772);transform-origin:0 50%;">Historique</span>
<div class="sep" style="left:354px;top:473px;width:1px;height:15px;background:#b8b8b8;"></div>
<svg style="left:362px;top:473px" width="17" height="14" viewBox="0 0 17 14"><path d="M1 10l4-4h10l-3.5 4z" fill="#e4e4e4" stroke="#a8a8a8" stroke-width=".7"/><path d="M1 10h10.500v2.500h-10.500z" fill="#c4c4c4" stroke="#9a9a9a" stroke-width=".6"/><path d="M11.500 10l3.500-4v2.500l-3.500 4z" fill="#b0b0b0"/><path d="M5 1.500l5 5" stroke="#2f9a3a" stroke-width="2.200"/><path d="M11.800 8.300l-5-.6 4.400-4.400z" fill="#2f9a3a"/></svg>
<span class="t" style="left:382.00px;top:472.00px;height:16px;line-height:16px;transform:scaleX(0.9162);transform-origin:0 50%;">Enregistrer</span>
<div class="sep" style="left:460px;top:473px;width:1px;height:15px;background:#b8b8b8;"></div>
<svg style="left:465px;top:473px" width="16" height="14" viewBox="0 0 16 14"><path d="M6 5l3-4h6l-3 4z" fill="#f2f2f2" stroke="#9a9a9a" stroke-width=".6"/><path d="M1 9l4-4h10l-3.500 4z" fill="#6e6e6e"/><path d="M1 9h10.500v3h-10.500z" fill="#555"/><path d="M11.500 9l3.500-4v3l-3.500 4z" fill="#444"/><path d="M2 11.500l-1.500 2h8l1.500-2z" fill="#e8e8e8" stroke="#aaa" stroke-width=".5"/></svg>
<span class="t" style="left:483.00px;top:472.00px;height:16px;line-height:16px;transform:scaleX(1.0146);transform-origin:0 50%;">Imprimer</span>
<div class="sep" style="left:542px;top:473px;width:1px;height:15px;background:#b8b8b8;"></div>
<svg style="left:547px;top:472px" width="16" height="16" viewBox="0 0 16 16"><path d="M.5 1.500h8v13h-8z" fill="#f0e6d8" stroke="#9a6a3a" stroke-width=".8"/><path d="M.5 1.500l5.500 2v12l-5.500-1z" fill="#c87a3a" stroke="#8a4a18" stroke-width=".6"/><path d="M15.500 6h-4.500v-3l-5.500 5 5.500 5v-3h4.500z" fill="#3cb043" stroke="#1f7a28" stroke-width=".8"/></svg>
<span class="t" style="left:566.00px;top:472.00px;height:16px;line-height:16px;transform:scaleX(0.9867);transform-origin:0 50%;">Quitter</span>
<div class="" style="left:649px;top:203px;width:630px;height:450px;border-radius:7px 7px 2px 2px;border:1px solid #3c3c3c;background:linear-gradient(#c9d6e6 0px,#d3e0ef 10px,#dce8f5 28px,#d6e4f4 100%);box-shadow:inset 0 0 0 1px rgba(245,250,255,.9);"></div>
<div class="" style="left:657px;top:232px;width:615px;height:413px;background:#f0f0f0;border:1px solid #c2cedb;border-top-color:#e6edf5;"></div>
<svg style="left:661px;top:215px" width="13" height="13" viewBox="0 0 13 13"><rect x="5.5" y=".5" width="7" height="6" fill="#f4cf4a" stroke="#d89a20"/><rect x=".5" y="4.5" width="4" height="4" fill="#fff" stroke="#d02020" stroke-width="1.2"/><rect x="6.5" y="8.5" width="5" height="4" fill="#6c8fe0" stroke="#3a60c0"/></svg>
<span class="t" style="left:679.50px;top:213.50px;height:16px;line-height:16px;transform:scaleX(0.9232);transform-origin:0 50%;color:#4c4c4c;">Spécifications du Grand Livre Général</span>
<div class="" style="left:1172px;top:213px;width:31px;height:17px;border:1px solid #8c98a8;border-radius:3px;background:linear-gradient(#dfe7f1 0%,#d3deeb 45%,#c5d2e3 50%,#cfdbe9 100%);box-shadow:inset 0 0 0 1px rgba(255,255,255,.55);"><div style="left:9px;top:8px;width:12px;height:5px;background:#fff;border:1px solid #555e6c;border-radius:1px;"></div></div>
<div class="" style="left:1205px;top:213px;width:31px;height:17px;border:1px solid #8c98a8;border-radius:3px;background:linear-gradient(#dfe7f1 0%,#d3deeb 45%,#c5d2e3 50%,#cfdbe9 100%);box-shadow:inset 0 0 0 1px rgba(255,255,255,.55);"><div style="left:9px;top:3px;width:12px;height:9px;background:#fff;border:1px solid #555e6c;border-radius:1px;"></div><div style="left:12px;top:6px;width:6px;height:3px;background:#c5d2e3;border:1px solid #555e6c;"></div></div>
<div class="" style="left:1238px;top:213px;width:31px;height:17px;border:1px solid #8c98a8;border-radius:3px;background:linear-gradient(#dfe7f1 0%,#d3deeb 45%,#c5d2e3 50%,#cfdbe9 100%);box-shadow:inset 0 0 0 1px rgba(255,255,255,.55);"><svg style="left:8px;top:2px" width="14" height="12" viewBox="0 0 14 12"><path d="M2.5 2l9 8M11.5 2l-9 8" stroke="#555e6c" stroke-width="4.4"/><path d="M2.5 2l9 8M11.5 2l-9 8" stroke="#fff" stroke-width="2.4"/></svg></div>
<span class="t" style="left:662.00px;top:236.00px;height:16px;line-height:16px;transform:scaleX(0.8387);transform-origin:0 50%;">Nombre de périodes comptables</span>
<span class="t" style="left:662.00px;top:258.00px;height:16px;line-height:16px;transform:scaleX(0.8373);transform-origin:0 50%;">1ère année des statistiques</span>
<span class="t" style="left:662.00px;top:280.00px;height:16px;line-height:16px;transform:scaleX(0.8341);transform-origin:0 50%;">Fermeture fiscale courante</span>
<span class="t" style="left:662.00px;top:302.00px;height:16px;line-height:16px;transform:scaleX(0.8268);transform-origin:0 50%;">Dernière période fermée</span>
<span class="t" style="left:662.00px;top:324.00px;height:16px;line-height:16px;transform:scaleX(0.8317);transform-origin:0 50%;">Premier compte du Grand Livre</span>
<span class="t" style="left:662.00px;top:346.00px;height:16px;line-height:16px;transform:scaleX(0.8392);transform-origin:0 50%;">Nombre de comptes crées</span>
<span class="t" style="left:662.00px;top:390.00px;height:16px;line-height:16px;transform:scaleX(0.8381);transform-origin:0 50%;">Premier compte de Grand Livre pour</span>
<span class="t" style="left:662.00px;top:434.00px;height:16px;line-height:16px;transform:scaleX(0.8332);transform-origin:0 50%;">Compte de profit ou (perte)</span>
<span class="t" style="left:662.00px;top:478.00px;height:16px;line-height:16px;transform:scaleX(0.8091);transform-origin:0 50%;">Comptes auxilières</span>
<span class="t" style="left:662.00px;top:500.00px;height:16px;line-height:16px;transform:scaleX(0.8587);transform-origin:0 50%;">Enc./décaissement par défaut</span>
<span class="t" style="left:662.00px;top:522.00px;height:16px;line-height:16px;transform:scaleX(0.8370);transform-origin:0 50%;">Escompte de paiement</span>
<span class="t" style="left:662.00px;top:544.00px;height:16px;line-height:16px;transform:scaleX(0.8498);transform-origin:0 50%;">Intérêt compte en souffrance</span>
<span class="t" style="left:662.00px;top:566.00px;height:16px;line-height:16px;transform:scaleX(0.8528);transform-origin:0 50%;">Taxe fédérale</span>
<span class="t" style="left:662.00px;top:588.00px;height:16px;line-height:16px;transform:scaleX(0.8590);transform-origin:0 50%;">Taxe provinciale</span>
<div class="tb" style="left:864px;top:237px;width:100px;height:20px;"></div>
<span class="t" style="left:865.80px;top:237.60px;height:16px;line-height:16px;transform:scaleX(0.7910);transform-origin:0 50%;">12</span>
<div class="tb" style="left:864px;top:259px;width:100px;height:20px;"></div>
<span class="t" style="left:865.80px;top:259.60px;height:16px;line-height:16px;transform:scaleX(0.8270);transform-origin:0 50%;">2009</span>
<div class="tb" style="left:864px;top:281px;width:100px;height:20px;"></div>
<span class="t" style="left:865.80px;top:281.60px;height:16px;line-height:16px;transform:scaleX(0.8472);transform-origin:0 50%;">31/12/2012</span>
<div class="tb" style="left:864px;top:303px;width:100px;height:20px;"></div>
<span class="t" style="left:865.80px;top:303.60px;height:16px;line-height:16px;transform:scaleX(0.8054);transform-origin:0 50%;">3</span>
<div class="tb" style="left:864px;top:325px;width:100px;height:20px;"></div>
<span class="t" style="left:865.80px;top:325.60px;height:16px;line-height:16px;transform:scaleX(0.8150);transform-origin:0 50%;">101</span>
<div class="tb" style="left:864px;top:347px;width:100px;height:20px;"></div>
<span class="t" style="left:865.80px;top:347.60px;height:16px;line-height:16px;transform:scaleX(0.8150);transform-origin:0 50%;">320</span>
<span class="t" style="left:891.88px;top:368.00px;height:16px;line-height:16px;font-size:10.6px;transform:scaleX(1.0458);transform-origin:50% 50%;font-weight:bold;">ACTIFS</span>
<span class="t" style="left:990.73px;top:368.00px;height:16px;line-height:16px;font-size:10.6px;transform:scaleX(1.0554);transform-origin:50% 50%;font-weight:bold;">PASSIFS</span>
<span class="t" style="left:1089.39px;top:368.00px;height:16px;line-height:16px;font-size:10.6px;transform:scaleX(1.0348);transform-origin:50% 50%;font-weight:bold;">REVENUS</span>
<span class="t" style="left:1188.66px;top:368.00px;height:16px;line-height:16px;font-size:10.6px;transform:scaleX(0.9881);transform-origin:50% 50%;font-weight:bold;">DÉPENSES</span>
<div class="tb" style="left:864px;top:391px;width:100px;height:20px;"></div>
<span class="t" style="left:865.80px;top:391.60px;height:16px;line-height:16px;transform:scaleX(0.8150);transform-origin:0 50%;">101</span>
<div class="tb" style="left:966px;top:391px;width:100px;height:20px;"></div>
<span class="t" style="left:967.80px;top:391.60px;height:16px;line-height:16px;transform:scaleX(0.8150);transform-origin:0 50%;">201</span>
<div class="tb" style="left:1068px;top:391px;width:100px;height:20px;"></div>
<span class="t" style="left:1069.80px;top:391.60px;height:16px;line-height:16px;transform:scaleX(0.8150);transform-origin:0 50%;">280</span>
<div class="tb" style="left:1170px;top:391px;width:100px;height:20px;"></div>
<span class="t" style="left:1171.80px;top:391.60px;height:16px;line-height:16px;transform:scaleX(0.8150);transform-origin:0 50%;">300</span>
<span class="t" style="left:873.62px;top:412.00px;height:16px;line-height:16px;font-size:10.6px;transform:scaleX(1.0433);transform-origin:50% 50%;font-weight:bold;">ACCUMULÉ(E)</span>
<span class="t" style="left:996.81px;top:412.00px;height:16px;line-height:16px;font-size:10.6px;transform:scaleX(1.0193);transform-origin:50% 50%;font-weight:bold;">BILAN</span>
<span class="t" style="left:1084.39px;top:412.00px;height:16px;line-height:16px;font-size:10.6px;transform:scaleX(1.0128);transform-origin:50% 50%;font-weight:bold;">RÉSULTATS</span>
<div class="tb" style="left:864px;top:435px;width:100px;height:20px;"></div>
<span class="t" style="left:865.80px;top:435.60px;height:16px;line-height:16px;transform:scaleX(0.8150);transform-origin:0 50%;">260</span>
<div class="tb" style="left:966px;top:435px;width:100px;height:20px;"></div>
<span class="t" style="left:967.80px;top:435.60px;height:16px;line-height:16px;transform:scaleX(0.8150);transform-origin:0 50%;">279</span>
<div class="tb" style="left:1068px;top:435px;width:100px;height:20px;"></div>
<span class="t" style="left:1069.80px;top:435.60px;height:16px;line-height:16px;transform:scaleX(0.8150);transform-origin:0 50%;">420</span>
<span class="t" style="left:888.84px;top:456.00px;height:16px;line-height:16px;font-size:10.6px;transform:scaleX(1.0152);transform-origin:50% 50%;font-weight:bold;">CLIENTS</span>
<span class="t" style="left:980.14px;top:456.00px;height:16px;line-height:16px;font-size:10.6px;transform:scaleX(1.0347);transform-origin:50% 50%;font-weight:bold;">TAUX, DÉLAI</span>
<span class="t" style="left:1075.41px;top:456.00px;height:16px;line-height:16px;font-size:10.6px;transform:scaleX(1.0217);transform-origin:50% 50%;font-weight:bold;">FOURNISSEURS</span>
<span class="t" style="left:1184.14px;top:456.00px;height:16px;line-height:16px;font-size:10.6px;transform:scaleX(1.0347);transform-origin:50% 50%;font-weight:bold;">TAUX, DELAI</span>
<div class="tb" style="left:864px;top:479px;width:100px;height:20px;"></div>
<span class="t" style="left:865.80px;top:479.60px;height:16px;line-height:16px;transform:scaleX(0.8150);transform-origin:0 50%;">105</span>
<div class="tb" style="left:1068px;top:479px;width:100px;height:20px;"></div>
<span class="t" style="left:1069.80px;top:479.60px;height:16px;line-height:16px;transform:scaleX(0.8409);transform-origin:0 50%;">205,206</span>
<div class="tb" style="left:864px;top:501px;width:100px;height:20px;"></div>
<span class="t" style="left:865.80px;top:501.60px;height:16px;line-height:16px;transform:scaleX(0.8150);transform-origin:0 50%;">102</span>
<div class="tb" style="left:1068px;top:501px;width:100px;height:20px;"></div>
<span class="t" style="left:1069.80px;top:501.60px;height:16px;line-height:16px;transform:scaleX(0.8150);transform-origin:0 50%;">102</span>
<div class="tb" style="left:864px;top:523px;width:100px;height:20px;"></div>
<span class="t" style="left:865.80px;top:523.60px;height:16px;line-height:16px;transform:scaleX(0.8150);transform-origin:0 50%;">295</span>
<div class="tb" style="left:966px;top:523px;width:100px;height:20px;"></div>
<span class="t" style="left:967.80px;top:523.60px;height:16px;line-height:16px;transform:scaleX(0.8054);transform-origin:0 50%;">0</span>
<div class="tb" style="left:1068px;top:523px;width:100px;height:20px;"></div>
<span class="t" style="left:1069.80px;top:523.60px;height:16px;line-height:16px;transform:scaleX(0.8150);transform-origin:0 50%;">326</span>
<div class="tb" style="left:1170px;top:523px;width:100px;height:20px;"></div>
<span class="t" style="left:1171.80px;top:523.60px;height:16px;line-height:16px;transform:scaleX(0.8054);transform-origin:0 50%;">0</span>
<div class="tb" style="left:864px;top:545px;width:100px;height:20px;"></div>
<span class="t" style="left:865.80px;top:545.60px;height:16px;line-height:16px;transform:scaleX(0.8150);transform-origin:0 50%;">294</span>
<div class="tb" style="left:966px;top:545px;width:100px;height:20px;"></div>
<span class="t" style="left:967.80px;top:545.60px;height:16px;line-height:16px;transform:scaleX(0.8345);transform-origin:0 50%;">1.5,30</span>
<div class="tb" style="left:1068px;top:545px;width:100px;height:20px;"></div>
<span class="t" style="left:1069.80px;top:545.60px;height:16px;line-height:16px;transform:scaleX(0.8150);transform-origin:0 50%;">399</span>
<div class="tb" style="left:1170px;top:545px;width:100px;height:20px;"></div>
<span class="t" style="left:1171.80px;top:545.60px;height:16px;line-height:16px;transform:scaleX(0.8221);transform-origin:0 50%;">2,30</span>
<div class="tb" style="left:864px;top:567px;width:100px;height:20px;"></div>
<span class="t" style="left:865.80px;top:567.60px;height:16px;line-height:16px;transform:scaleX(0.8150);transform-origin:0 50%;">201</span>
<div class="tb" style="left:966px;top:567px;width:100px;height:20px;"></div>
<span class="t" style="left:967.80px;top:567.60px;height:16px;line-height:16px;transform:scaleX(0.8054);transform-origin:0 50%;">5</span>
<div class="tb" style="left:1068px;top:567px;width:100px;height:20px;"></div>
<span class="t" style="left:1069.80px;top:567.60px;height:16px;line-height:16px;transform:scaleX(0.8150);transform-origin:0 50%;">201</span>
<div class="tb" style="left:1170px;top:567px;width:100px;height:20px;"></div>
<span class="t" style="left:1171.80px;top:567.60px;height:16px;line-height:16px;transform:scaleX(0.8054);transform-origin:0 50%;">5</span>
<div class="tb" style="left:864px;top:589px;width:100px;height:20px;"></div>
<span class="t" style="left:865.80px;top:589.60px;height:16px;line-height:16px;transform:scaleX(0.8150);transform-origin:0 50%;">202</span>
<div class="tb" style="left:966px;top:589px;width:100px;height:20px;"></div>
<span class="t" style="left:967.80px;top:589.60px;height:16px;line-height:16px;transform:scaleX(0.8058);transform-origin:0 50%;">9.5</span>
<div class="tb" style="left:1068px;top:589px;width:100px;height:20px;"></div>
<span class="t" style="left:1069.80px;top:589.60px;height:16px;line-height:16px;transform:scaleX(0.8150);transform-origin:0 50%;">202</span>
<div class="tb" style="left:1170px;top:589px;width:100px;height:20px;"></div>
<span class="t" style="left:1171.80px;top:589.60px;height:16px;line-height:16px;transform:scaleX(0.8058);transform-origin:0 50%;">9.5</span>
<span class="t" style="left:665.30px;top:613.20px;height:16px;line-height:16px;font-size:13.5px;transform:scaleX(0.9126);transform-origin:0 50%;font-weight:bold;font-style:italic;">Sécurité (Activée/Désactivée)</span>
<div class="" style="left:866px;top:618px;width:11px;height:11px;background:#fff;border:1px solid #1c1c1c;"></div>
<div class="btn" style="left:946px;top:618px;width:173px;height:24px;"></div>
<span class="t" style="left:962.67px;top:621.80px;height:16px;line-height:16px;transform:scaleX(0.8378);transform-origin:50% 50%;">Changer le mot de passe</span>
<div class="btn" style="left:1121px;top:618px;width:73px;height:24px;"></div>
<span class="t" style="left:1126.94px;top:621.80px;height:16px;line-height:16px;transform:scaleX(0.8180);transform-origin:50% 50%;">Enregistrer</span>
<div class="btn" style="left:1196px;top:618px;width:73px;height:24px;"></div>
<span class="t" style="left:1212.37px;top:621.80px;height:16px;line-height:16px;transform:scaleX(0.7947);transform-origin:50% 50%;">Fermer</span>
<div class="" style="left:215px;top:57px;width:217px;height:134px;background:#f0f0f0;border:1px solid #a0a0a0;border-right-color:#8a8a8a;border-bottom-color:#8a8a8a;box-shadow:2px 2px 1px rgba(70,70,70,.55);"></div>
<div class="" style="left:216px;top:58px;width:215px;height:21.5px;background:#3399ff;"></div>
<span class="t" style="left:250.60px;top:61.70px;height:16px;line-height:16px;transform:scaleX(0.9458);transform-origin:0 50%;color:#fff;">Fichier maitre</span>
<span class="t" style="left:250.60px;top:83.60px;height:16px;line-height:16px;transform:scaleX(0.9527);transform-origin:0 50%;color:#000;">Période comptable</span>
<span class="t" style="left:250.60px;top:105.50px;height:16px;line-height:16px;transform:scaleX(0.9346);transform-origin:0 50%;color:#000;">Dispositions du Grand Livre</span>
<span class="t" style="left:250.60px;top:127.40px;height:16px;line-height:16px;transform:scaleX(0.9527);transform-origin:0 50%;color:#000;">Transactions par compte</span>
<span class="t" style="left:250.60px;top:149.30px;height:16px;line-height:16px;transform:scaleX(0.9455);transform-origin:0 50%;color:#000;">Tous les comptes</span>
<span class="t" style="left:250.60px;top:171.20px;height:16px;line-height:16px;transform:scaleX(0.9701);transform-origin:0 50%;color:#000;">Historique</span>
</body></html>
